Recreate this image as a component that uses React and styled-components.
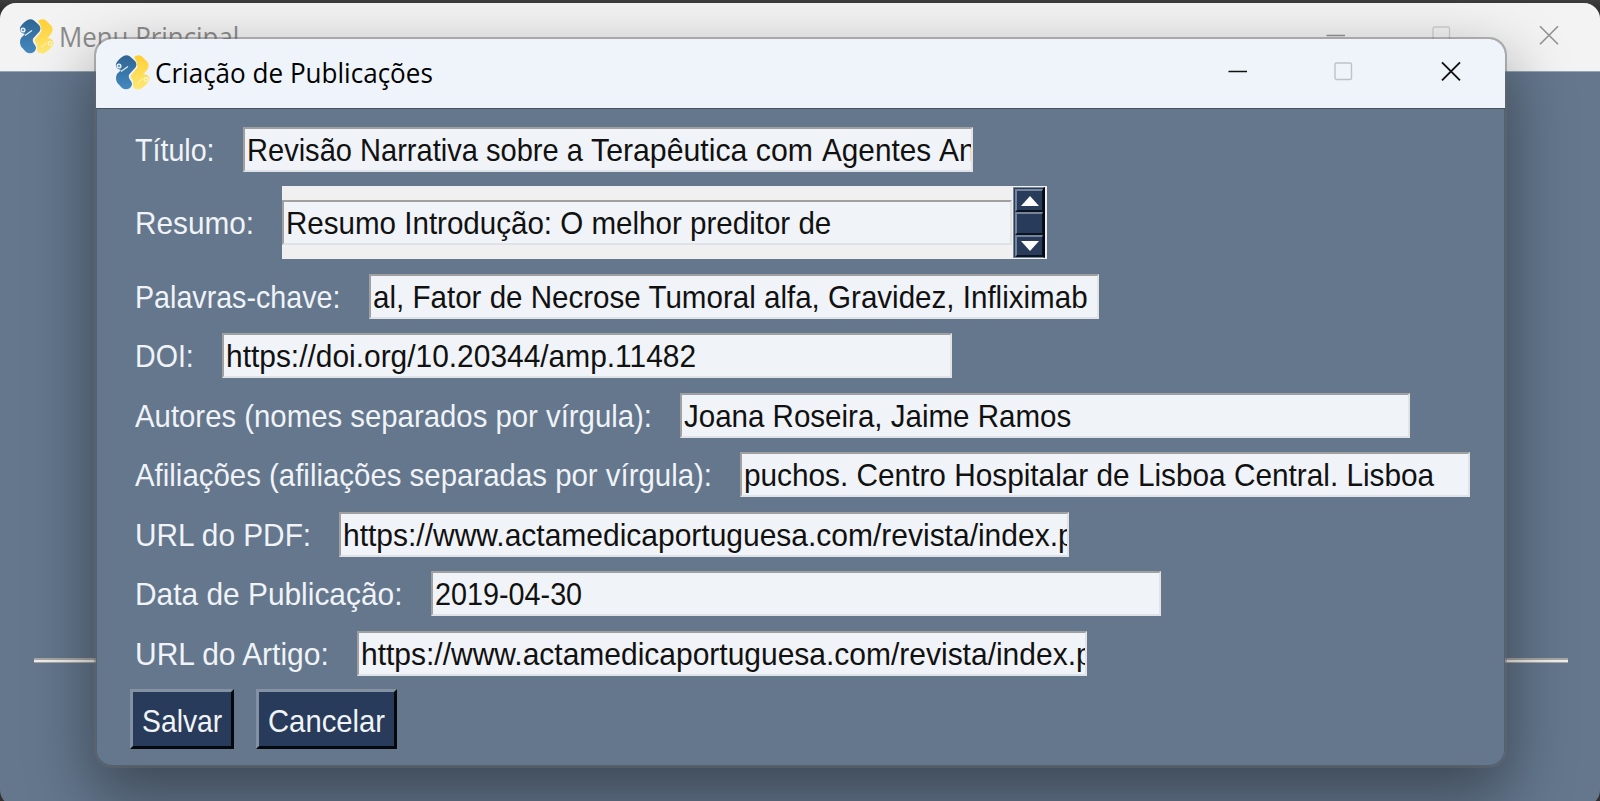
import React, { useLayoutEffect, useRef, useState } from "react";
import styled, { createGlobalStyle } from "styled-components";

const Global = createGlobalStyle`
  * { box-sizing: border-box; }
  html, body { margin: 0; background: #303030; overflow: hidden; }
`;

const Desktop = styled.main`
  position: relative;
  width: 1600px;
  height: 801px;
  padding-top: 3px;
  background: linear-gradient(#3d3d3d, #303030 10px);
  overflow: hidden;
  font-family: "Liberation Sans", Arial, sans-serif;
  font-size: 31.5px;
`;

const MainWindow = styled.section`
  display: flex;
  flex-direction: column;
  height: 803px;
  border-radius: 16px;
  background: #64778d;
  overflow: hidden;
`;

const Dialog = styled.section`
  position: absolute;
  left: 96px;
  top: 39px;
  width: 1409px;
  height: 727px;
  display: flex;
  flex-direction: column;
  border-radius: 16px;
  background: #64778d;
  box-shadow: inset 0 0 0 1px #526173;
  overflow: hidden;
`;

const DialogShadow = styled.div`
  position: absolute;
  left: 96px;
  top: 39px;
  width: 1409px;
  height: 727px;
  border-radius: 16px;
  box-shadow: 0 0 0 2px rgba(104, 104, 104, 0.45), 0 26px 64px 4px rgba(0, 0, 0, 0.4);
`;

const TitleBar = styled.header`
  display: flex;
  align-items: flex-start;
  flex: none;
  height: ${(p) => (p.$active ? 70 : 69)}px;
  padding: 16px 0 0 19px;
  background: ${(p) => (p.$active ? "#eef4f9" : "#f3f3f3")};
  color: ${(p) => (p.$active ? "#000" : "#8c8c8c")};
  border-bottom: 1px solid ${(p) => (p.$active ? "#465362" : "#93a4b3")};
  font-family: "Open Sans", "Noto Sans", sans-serif;
  font-size: 27px;
  line-height: 36px;
`;

const TitleText = styled.h1`
  margin: 0 auto 0 5px;
  font: inherit;
`;

const WindowControls = styled.div`
  display: flex;
  gap: 87px;
  padding: 6px ${(p) => (p.$active ? 44 : 41)}px 0 0;
`;

const Form = styled.form`
  display: flex;
  flex-direction: column;
  gap: 14.45px;
  padding: 18px 0 0 34px;
`;

const Row = styled.div`
  display: flex;
  align-items: center;
  gap: 28px;
  padding-left: 5px;
  height: ${(p) => (p.$tall ? 73 : 45)}px;
`;

const Label = styled.label`
  flex: none;
  color: #f0f3f7;
  line-height: 47px;
  height: 45px;
`;

const Field = styled.div`
  flex: none;
  display: flex;
  width: 730px;
  height: 45px;
  padding-left: 2px;
  overflow: hidden;
  background: #f0f3f7;
  color: #111;
  line-height: 43px;
  border: 2px solid;
  border-color: #a0a0a0 #e3e3e3 #dfe2e6 #a0a0a0;
`;

const ScrollFrame = styled.div`
  display: flex;
  align-items: center;
  width: 765px;
  height: 73px;
  background: #f0f0f0;
`;

const ScrollBar = styled.div`
  display: flex;
  flex-direction: column;
  width: 32px;
  height: 71px;
  margin-left: 1px;
  padding: 1px 0 0 1px;
  background: #283b5b;
  border: 1px solid #7b8798;
  border-right: 2px solid #050a12;
`;

const ScrollPart = styled.div`
  display: flex;
  align-items: center;
  justify-content: center;
  flex: 1;
  border-style: solid;
  border-width: 2px 1px 2px 2px;
  border-color: #77859a #0b1220 #0b1220 #77859a;
`;

const Buttons = styled.div`
  display: flex;
  gap: 22px;
  margin-top: -1px;
`;

const Button = styled.button`
  width: ${(p) => p.$width}px;
  height: 60px;
  padding: 2px 0 0 9px;
  border: 3px solid;
  border-color: #8491a3 #05080d #05080d #8491a3;
  background: #283b5b;
  color: #f0f3f7;
  font: inherit;
  line-height: 54px;
  text-align: left;
`;

const Separator = styled.hr`
  width: 1534px;
  height: 5px;
  margin: 586px 0 0 34px;
  border: 1px solid #a9a7a3;
  border-width: 2px 0 1px;
  background: #efefef;
`;

const FitBox = styled.span`
  display: block;
  flex: none;
  width: ${(p) => p.$width}px;
  white-space: pre;
`;

const FitInner = styled.span`
  display: inline-block;
  transform-origin: 0 50%;
`;

function Fit({ width, children }) {
  const ref = useRef(null);
  const [scale, setScale] = useState(1);
  useLayoutEffect(() => {
    setScale(width / ref.current.offsetWidth);
  }, [width]);
  return (
    <FitBox $width={width}>
      <FitInner ref={ref} style={{ transform: `scaleX(${scale})` }}>{children}</FitInner>
    </FitBox>
  );
}

function Logo({ id }) {
  return (
    <svg width="35" height="35" viewBox="0 0 35 35">
      <defs>
        <linearGradient id={id + "b"} x1="0" y1="0" x2="0" y2="1">
          <stop offset="0" stopColor="#2f6491" />
          <stop offset="1" stopColor="#4489c0" />
        </linearGradient>
        <linearGradient id={id + "y"} x1="0" y1="0" x2="0" y2="1">
          <stop offset="0" stopColor="#ffcf35" />
          <stop offset="1" stopColor="#ffe873" />
        </linearGradient>
      </defs>
      <path fill={`url(#${id}y)`} d="M19 2 Q23 -1 27 1.5 L32.5 7 Q35 11 32 15 L28.5 19 Q34 19.5 34.5 24 Q34 28 27 33 Q23 36 19 33 Q17.5 31 18 29 Q19 26 16 23 Q15 21 17 19 L22 13 Q23.5 8 19 2Z" />
      <path fill={`url(#${id}b)`} d="M1 9 Q3 4 9 0.8 Q12 -0.5 15 1.5 L20 6 Q22.5 9 20.5 12.5 L14.5 19 Q13 21 14.5 24 L16.5 27 Q18 30 15 33 Q11 35.5 7 33 L2 27.5 Q0 23 2 19 L6 15 Q0 14 1 9Z" />
      <circle cx="4" cy="11" r="1.9" fill="#6f9cc0" stroke="#eef4f9" strokeWidth="1.3" />
      <path d="M6 16.5 L13 11.5" stroke="#e4edf4" strokeWidth="1.1" />
      <path d="M22 28.5 L28 23.5" stroke="#fff6c4" strokeWidth="1" />
      <circle cx="31" cy="24.5" r="1.9" fill="none" stroke="#fff8d4" strokeWidth="1.1" />
    </svg>
  );
}

function Controls({ active }) {
  const c = active ? "#111" : "#929292";
  return (
    <WindowControls $active={active}>
      <svg width="20" height="20"><path d="M1.5 10.5H20" stroke={c} strokeWidth="1.7" /></svg>
      <svg width="20" height="20"><rect x="1" y="2" width="16.5" height="16.5" rx="1.5" fill="none" stroke={active ? "#bdc2c6" : "#d0d0d0"} strokeWidth="1.4" /></svg>
      <svg width="20" height="20"><path d="M1 1.3L19 19.3M19 1.3L1 19.3" stroke={c} strokeWidth={active ? 1.9 : 1.6} /></svg>
    </WindowControls>
  );
}

// label, label width, then the visible runs of the value with their widths
const rows = [
  ["Título:", 80, [["Revisão Narrativa sobre a ", 344], ["Terapêutica com ", 230.5], ["Agentes ", 117], ["An", 37]]],
  ["Resumo:", 119, [["Resumo Introdução: O melhor preditor de", 545]]],
  ["Palavras-chave:", 205.5, [["al, Fator de Necrose Tumoral alfa, Gravidez, Infliximab", 715]]],
  ["DOI:", 59, [["https://doi.org/10.20344/amp.11482", 470]]],
  ["Autores (nomes separados por vírgula):", 517, [["Joana Roseira, Jaime Ramos", 387]]],
  ["Afiliações (afiliações separadas por vírgula):", 577, [["puchos. Centro Hospitalar de Lisboa Central. Lisboa", 690]]],
  ["URL do PDF:", 176, [["https://www.actamedicaportuguesa.com/revista/index.p", 732]]],
  ["Data de Publicação:", 267.5, [["2019-04-30", 147]]],
  ["URL do Artigo:", 194, [["https://www.actamedicaportuguesa.com/revista/index.p", 732]]],
];

export default function App() {
  return (
    <Desktop>
      <Global />
      <MainWindow>
        <TitleBar>
          <Logo id="m" />
          <TitleText><Fit width={180}>Menu Principal</Fit></TitleText>
          <Controls />
        </TitleBar>
        <Separator />
      </MainWindow>
      <DialogShadow />
      <Dialog>
        <TitleBar $active>
          <Logo id="d" />
          <TitleText><Fit width={278}>Criação de Publicações</Fit></TitleText>
          <Controls active />
        </TitleBar>
        <Form>
          {rows.map(([label, lw, runs]) => {
            const tall = label === "Resumo:";
            const field = (
              <Field>
                {runs.map(([text, w]) => <Fit key={text} width={w}>{text}</Fit>)}
              </Field>
            );
            return (
              <Row key={label} $tall={tall}>
                <Label><Fit width={lw}>{label}</Fit></Label>
                {tall ? (
                  <ScrollFrame>
                    {field}
                    <ScrollBar>
                      <ScrollPart><svg width="18" height="10"><path d="M0 10L9 0L18 10Z" fill="#fff" /></svg></ScrollPart>
                      <ScrollPart />
                      <ScrollPart><svg width="18" height="10"><path d="M0 0L9 10L18 0Z" fill="#fff" /></svg></ScrollPart>
                    </ScrollBar>
                  </ScrollFrame>
                ) : field}
              </Row>
            );
          })}
          <Buttons>
            <Button type="button" $width={104}><Fit width={80}>Salvar</Fit></Button>
            <Button type="button" $width={141}><Fit width={117}>Cancelar</Fit></Button>
          </Buttons>
        </Form>
      </Dialog>
    </Desktop>
  );
}
